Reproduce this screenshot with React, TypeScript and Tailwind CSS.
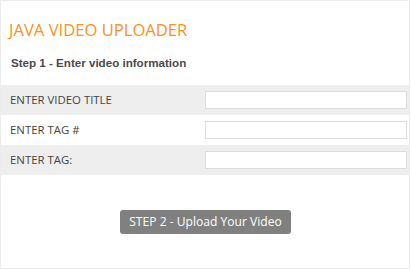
const fields = [
  { label: "ENTER VIDEO TITLE", shade: true },
  { label: "ENTER TAG #", shade: false },
  { label: "ENTER TAG:", shade: true },
];

export default function App() {
  return (
    <div className="w-[410px] h-[269px] border border-[#ececec] bg-white flex flex-col font-['Open_Sans',sans-serif]">
      <h1 className="mt-[17px] ml-[8px] text-[16.6px] leading-[24px] text-[#f7941d]">
        JAVA VIDEO UPLOADER
      </h1>
      <h2 className="mt-[14px] ml-[10px] text-[11.6px] leading-[14px] font-bold text-[#4a4a4a] font-['Liberation_Sans',Arial,sans-serif]">
        Step 1 - Enter video information
      </h2>
      <div className="mt-[15px] flex flex-col">
        {fields.map((f) => (
          <div
            key={f.label}
            className={`h-[30px] flex items-center justify-between pl-[9px] pr-[2px] ${
              f.shade ? "bg-[#eeeeee]" : "bg-white"
            }`}
          >
            <span className="text-[11.4px] text-[#444]">{f.label}</span>
            <input
              type="text"
              className="w-[202px] h-[18px] bg-white border border-[#dcdcdc] outline-none"
            />
          </div>
        ))}
      </div>
      <div className="flex-1 flex items-start justify-center pt-[35px] pl-[1px]">
        <button className="h-[24px] px-[9px] rounded-[3px] bg-[#808080] text-white text-[12.1px] leading-[24px]">
          STEP 2 - Upload Your Video
        </button>
      </div>
    </div>
  );
}
